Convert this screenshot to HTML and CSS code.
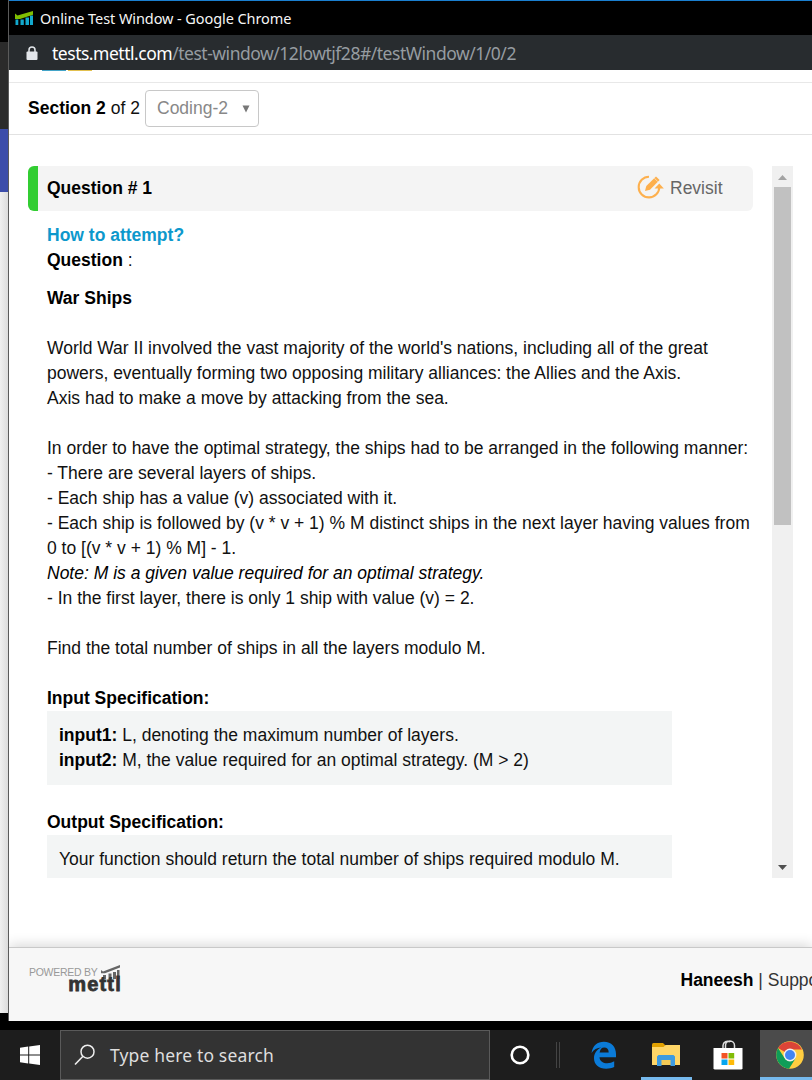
FILE: index.html
```html
<!DOCTYPE html>
<html lang="en">
<head>
<meta charset="utf-8">
<title>Online Test Window</title>
<link rel="stylesheet" href="styles.css">
</head>
<body>
<div class="screen">
  <div class="workspace">
    <div class="backdrop"><div class="bd-black"></div><div class="bd-dark"></div><div class="bd-blue"></div><div class="bd-light"></div></div>
    <div class="window">
      <div class="titlebar">
        <svg class="favicon" width="19" height="15" viewBox="0 0 19 15"><path d="M.5 8.500h2.800v5.500H.5zM5.500 8.500h3.300v5.500H5.500zM10.500 6.500h3.500v7.500h-3.500zM15 4.500h3v9.500h-3z" fill="#12a9ce"/><path d="M0 2.500l2.500 2L18 0v3.800L5 8 0 8z" fill="#80bd01"/></svg>
        <span class="title-text">Online Test Window - Google Chrome</span>
      </div>
      <div class="urlbar">
        <svg class="lock" width="12" height="15" viewBox="0 0 12 15"><path d="M3 6V4a3 3 0 0 1 6 0v2" fill="none" stroke="#e3e6ea" stroke-width="1.500"/><rect x=".5" y="5.500" width="11" height="8.500" rx="1" fill="#e3e6ea"/></svg>
        <span class="url"><span class="host">tests.mettl.com</span>/test-window/12lowtjf28#/testWindow/1/0/2</span>
      </div>
      <div class="topstrip"><i class="tab-blue"></i><i class="tab-gold"></i></div>
      <div class="section">
        <span class="sec-label"><b>Section 2</b> of 2</span>
        <div class="select"><span>Coding-2</span><svg width="8" height="8" viewBox="0 0 8 8"><path d="M.5 .5h7L4 7.500z" fill="#777"/></svg></div>
      </div>
      <div class="content">
        <div class="question">
          <div class="q-head">
            <b class="q-no">Question # 1</b>
            <svg class="pen" width="28" height="26" viewBox="0 0 28 26"><path d="M13 2.800A10.300 10.300 0 1 0 23.300 13" fill="none" stroke="#fdb04e" stroke-width="2.100"/><path d="M18.500 14.500L23.300 9.500 27.800 14.500z" fill="#fdb04e"/><path d="M9 17l1.300-5L20 2.400l3.600 3.600L14 15.700z" fill="#fdaf4c"/><path d="M18.200 4l3.600 3.600" stroke="#f5f5f5" stroke-width=".6"/></svg>
            <span class="revisit">Revisit</span>
          </div>
          <div class="q-body">
            <p class="how"><b>How to attempt?</b></p>
            <p><b>Question</b> :</p>
            <p class="name"><b>War Ships</b></p>
            <p class="para">World War II involved the vast majority of the world's nations, including all of the great</p>
            <p>powers, eventually forming two opposing military alliances: the Allies and the Axis.</p>
            <p>Axis had to make a move by attacking from the sea.</p>
            <p class="para">In order to have the optimal strategy, the ships had to be arranged in the following manner:</p>
            <p>- There are several layers of ships.</p>
            <p>- Each ship has a value (v) associated with it.</p>
            <p>- Each ship is followed by (v * v + 1) % M distinct ships in the next layer having values from</p>
            <p>0 to [(v * v + 1) % M] - 1.</p>
            <p class="note">Note: M is a given value required for an optimal strategy.</p>
            <p>- In the first layer, there is only 1 ship with value (v) = 2.</p>
            <p class="para">Find the total number of ships in all the layers modulo M.</p>
            <p class="para"><b>Input Specification:</b></p>
            <div class="spec">
              <p><b>input1:</b> L, denoting the maximum number of layers.</p>
              <p><b>input2:</b> M, the value required for an optimal strategy. (M &gt; 2)</p>
            </div>
            <p class="para"><b>Output Specification:</b></p>
            <div class="spec">
              <p>Your function should return the total number of ships required modulo M.</p>
            </div>
          </div>
        </div>
        <div class="scrollbar">
          <svg width="21" height="21" viewBox="0 0 21 21"><path d="M6 14l4.500-5 4.500 5z" fill="#a3a3a3"/></svg>
          <div class="thumb"></div>
          <svg width="21" height="21" viewBox="0 0 21 21"><path d="M6 8h9l-4.500 5z" fill="#505050"/></svg>
        </div>
      </div>
      <div class="footer">
        <div class="brand">
          <span class="powered">POWERED BY</span>
          <svg class="bars" width="20" height="14" viewBox="0 0 20 14"><path d="M0 5l2 1.500L19 0v2.500L4 8.300H0zM2 10h3v4H2zM7.500 8.500h3V14h-3zM12 7h3v7h-3zM16 5h2.500v9H16z" fill="#666"/></svg>
          <b class="mettl">mettl</b>
        </div>
        <span class="user"><b>Haneesh</b> | Support</span>
      </div>
    </div>
  </div>
  <div class="taskbar">
    <div class="start"><svg width="20" height="20" viewBox="0 0 20 20"><path d="M0 2.800L8.200 1.600V9.500H0zM9.200 1.400L20 0v9.500H9.200zM0 10.500h8.200v8L0 17.300zM9.200 10.500H20V20L9.200 18.600z" fill="#fff"/></svg></div>
    <div class="search">
      <svg width="22" height="22" viewBox="0 0 22 22"><circle cx="13.500" cy="7.700" r="6.500" fill="none" stroke="#eee" stroke-width="1.500"/><path d="M9 12.300L1 20.500" stroke="#eee" stroke-width="1.600"/></svg>
      <span>Type here to search</span>
    </div>
    <div class="cell cortana"><svg width="20" height="20" viewBox="0 0 20 20"><circle cx="10" cy="10" r="8.300" fill="none" stroke="#fff" stroke-width="2.600"/></svg></div>
    <div class="divider"></div>
    <div class="cell edge"><svg width="26" height="28" viewBox="0 0 26 28"><path d="M.5 12C1.800 4.500 6.500.8 12.800.8 20.700.8 25 6.200 25 13v3.200H8.500c.3 4.300 3.800 6 7.700 6 2.600 0 5-.6 7-1.900V26c-2.300 1.200-5.100 1.700-8 1.700C7.600 27.700 3 23.500 3 17.200c0-4.800 2.800-8.600 7.300-10.600C6.100 6.700 2.600 8.800.5 12zM8.600 11.500h9.100c0-3.200-1.700-4.900-4.500-4.900-2.500 0-4.100 2-4.600 4.900z" fill="#0b7bd8"/></svg></div>
    <div class="cell files"><svg width="28" height="24" viewBox="0 0 28 24"><path d="M0 1.500Q0 0 1.500 0H11l2 2v5H0z" fill="#e2a100"/><path d="M0 4h11.500l2-2H28v20H0z" fill="#ffd667"/><path d="M9.500 17h9v5h-9z" fill="#f3c955"/><path d="M5 23V13.500L6.500 12h15l1.500 1.500V23h-4.500v-6h-9v6z" fill="#3e9be0"/></svg></div>
    <div class="cell store"><svg width="30" height="30" viewBox="0 0 30 30"><path d="M10 8V5.500a4.500 4.500 0 0 1 7-3.500M12.500 8V5.500a4.500 4.500 0 0 1 9 0V8" fill="none" stroke="#ddd" stroke-width="1.500"/><path d="M.5 8h29v20.500l-1 1h-27l-1-1z" fill="#fff"/><path d="M8.500 13h6v5.500h-6z" fill="#f35325"/><path d="M15.500 13h5.700v5.500h-5.700z" fill="#81bc06"/><path d="M8.500 19.500h6V25h-6z" fill="#05a6f0"/><path d="M15.500 19.500h5.700V25h-5.700z" fill="#ffba08"/></svg></div>
    <div class="cell chrome"><svg width="28" height="28" viewBox="0 0 28 28"><circle cx="14" cy="14" r="13.800" fill="#ffcd40"/><path d="M14 14L2.050 7.100A13.800 13.800 0 0 1 26 8.500H14z" fill="#db4437"/><path d="M2.050 7.100A13.800 13.800 0 0 0 13 27.760L19.500 17.500 14 19.500 8.500 17z" fill="#0f9d58"/><circle cx="14" cy="14" r="6.400" fill="#f1f1f1"/><circle cx="14" cy="14" r="5" fill="#4285f4"/></svg></div>
  </div>
</div>
</body>
</html>
```
FILE: styles.css
```css
* { box-sizing: border-box; }
body { margin: 0; overflow: hidden; background: #000; }
p { margin: 0; }
svg { display: block; flex: none; }
.screen { width: 812px; height: 1080px; overflow: hidden; display: flex; flex-direction: column; background: #000; font: 17.5px/25px "Liberation Sans", Arial, sans-serif; color: #111; }
.screen b { color: #000; }
.workspace { height: 1030px; display: flex; flex: none; }
.backdrop { width: 9px; flex: none; border-right: 1px solid #5b5b5b; height: 1021px; }
.bd-black { height: 42px; background: #000; }
.bd-dark { height: 87px; background: #2b2b2b; }
.bd-blue { height: 63px; background: #3c4daa; }
.bd-light { height: 821px; background: linear-gradient(90deg, #f0f0f0, #dcdcdc); }
.window { width: 803px; height: 1021px; flex: none; overflow: hidden; background: #fff; display: flex; flex-direction: column; }
.titlebar { height: 35px; flex: none; background: #000; border-top: 1px solid #1a7fd0; display: flex; align-items: center; padding-left: 6px; color: #f5f5f5; font: 14.5px/20px "Noto Sans", sans-serif; white-space: nowrap; }
.title-text { margin-left: 6px; letter-spacing: -.08px; }
.urlbar { height: 35px; flex: none; background: #282c2f; display: flex; align-items: center; padding-left: 17px; color: #969ca1; font: 17.5px/24px "Noto Sans", sans-serif; white-space: nowrap; }
.lock { margin-top: 1px; }
.url { margin-left: 14px; letter-spacing: -.48px; }
.host { color: #fff; }
.topstrip { height: 13px; flex: none; border-bottom: 1px solid #e8e8e8; display: flex; padding-left: 33px; gap: 2px; }
.topstrip i { height: 1px; width: 24px; }
.tab-blue { background: #43a4c8; }
.tab-gold { background: #e2c04e; }
.section { height: 52px; flex: none; border-bottom: 1px solid #e2e2e2; display: flex; align-items: center; padding-left: 19px; white-space: nowrap; }
.sec-label { width: 117px; }
.select { width: 114px; height: 37px; border: 1px solid #c8c8c8; border-radius: 4px; display: flex; align-items: center; justify-content: space-between; padding: 0 8px 0 11px; color: #888; }
.content { height: 812px; flex: none; padding: 31px 19px 0; display: flex; gap: 19px; }
.question { width: 725px; height: 712px; overflow: hidden; }
.q-head { height: 45px; border-left: 10px solid #32cd32; border-radius: 6px; background: #f4f4f4; display: flex; align-items: center; padding-left: 9px; }
.q-no { width: 589px; flex: none; }
.pen { margin-bottom: 3px; }
.revisit { color: #666; margin-left: 6px; }
.q-body { padding: 12px 0 0 19px; white-space: nowrap; }
.how b { color: #0d98cc; }
.name { margin-top: 13px; }
.para { margin-top: 25px; }
.note { font-style: italic; color: #000; }
.spec { width: 625px; background: #f3f5f5; padding: 12px; }
.scrollbar { width: 21px; height: 712px; background: #f0f0f0; display: flex; flex-direction: column; }
.thumb { height: 338px; margin: 0 2px auto; background: #c1c1c1; }
.footer { height: 74px; flex: none; border-top: 1px solid #c9c9c9; background: #f7f7f7; box-shadow: 0 -2px 12px rgba(0,0,0,.16); display: flex; justify-content: space-between; padding: 20px 0 0 20px; white-space: nowrap; }
.brand { width: 95px; height: 32px; display: grid; grid-template-columns: 72px 20px; grid-template-rows: 10px 18px; }
.powered { font-size: 10.5px; line-height: 8px; color: #999; letter-spacing: -.28px; }
.bars { margin-top: -3px; }
.brand .mettl { grid-column: 1 / 3; justify-self: end; font-size: 20px; line-height: 12px; color: #333; letter-spacing: 1.2px; margin-right: -1px; -webkit-text-stroke: .8px #333; }
.user { width: 131.5px; flex: none; color: #333; }
.taskbar { height: 50px; flex: none; background: #1d1d1d; display: flex; }
.start { width: 60px; flex: none; display: flex; align-items: center; justify-content: center; }
.search { width: 430px; flex: none; border: 1px solid #5a5a5a; background: #333; display: flex; align-items: center; gap: 14px; padding-left: 13px; color: #dedede; font: 17.5px/24px "Noto Sans", sans-serif; letter-spacing: .15px; white-space: nowrap; }
.cell { display: flex; align-items: center; justify-content: center; flex: none; }
.cortana { width: 60px; }
.divider { width: 4px; flex: none; height: 26px; margin: 12px 0 0 6px; border: solid #444; border-width: 0 1px; }
.edge { width: 81px; padding-left: 7px; }
.files { width: 51px; border-bottom: 3px solid #76b9ed; padding: 2px 2px 0 0; }
.store { width: 68px; padding-left: 3px; }
.chrome { width: 60px; background: #4b4b4b; border-bottom: 3px solid #76b9ed; padding-top: 3px; }
```
